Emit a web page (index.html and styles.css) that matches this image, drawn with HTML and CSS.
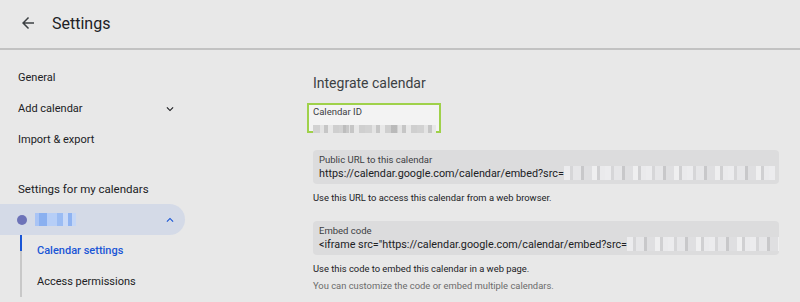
FILE: index.html
```html
<!DOCTYPE html>
<html lang="en">
<head>
  <meta charset="UTF-8">
  <title>Settings</title>
  <link rel="stylesheet" href="styles.css">
</head>
<body>
  <header class="topbar">
    <button class="back-btn" aria-label="Back">
      <svg viewBox="0 0 24 24" width="18" height="18"><path d="M20 11H7.83l5.59-5.59L12 4l-8 8 8 8 1.41-1.41L7.83 13H20v-2z" fill="#3c4043"/></svg>
    </button>
    <h1>Settings</h1>
  </header>

  <div class="layout">
    <!-- SIDEBAR -->
    <nav class="sidebar">
      <div class="nav-item">General</div>
      <div class="nav-item">Add calendar
        <svg class="chev" viewBox="0 0 24 24" width="14" height="14"><path d="M7.41 8.59 12 13.17l4.59-4.58L18 10l-6 6-6-6z" fill="#202124"/></svg>
      </div>
      <div class="nav-item">Import &amp; export</div>

      <div class="nav-title">Settings for my calendars</div>
      <div class="cal-row">
        <span class="cal-dot"></span>
        <span class="mosaic name-mosaic"></span>
        <svg class="chev" viewBox="0 0 24 24" width="14" height="14"><path d="M7.41 15.41 12 10.83l4.59 4.58L18 14l-6-6-6 6z" fill="#1a56d6"/></svg>
      </div>
      <div class="sub-nav">
        <div class="sub-item active">Calendar settings</div>
        <div class="sub-item">Access permissions</div>
      </div>
    </nav>

    <!-- MAIN -->
    <main class="content">
      <h2>Integrate calendar</h2>

      <div class="id-box">
        <div class="field-label">Calendar ID</div>
        <span class="mosaic id-mosaic"></span>
      </div>

      <div class="field-box">
        <div class="field-label">Public URL to this calendar</div>
        <div class="field-value">https://calendar.google.com/calendar/embed?src=<span class="mosaic url-mosaic"></span></div>
      </div>
      <p class="hint">Use this URL to access this calendar from a web browser.</p>

      <div class="field-box embed">
        <div class="field-label">Embed code</div>
        <div class="field-value">&lt;iframe src="https://calendar.google.com/calendar/embed?src=<span class="mosaic url-mosaic"></span></div>
      </div>
      <p class="hint">Use this code to embed this calendar in a web page.</p>
      <p class="hint muted">You can customize the code or embed multiple calendars.</p>
    </main>
  </div>
</body>
</html>
```

FILE: styles.css
```css
* {
  margin: 0;
  padding: 0;
  box-sizing: border-box;
}

body {
  font-family: Roboto, 'Liberation Sans', sans-serif;
  background-color: #e8e8e8;
  color: #202124;
  width: 800px;
  height: 302px;
  overflow: hidden;
}

.topbar {
  height: 50px;
  display: flex;
  align-items: center;
  padding-left: 19px;
  border-bottom: 2px solid #c2c2c2;
}

.back-btn {
  border: none;
  background: none;
  width: 18px;
  height: 18px;
  display: flex;
  margin-right: 15px;
  margin-top: -2px;
}

.topbar h1 {
  font-size: 16px;
  font-weight: 400;
  color: #202124;
  margin-top: -2px;
}

.layout {
  display: flex;
}

.sidebar {
  width: 185px;
  flex-shrink: 0;
  padding-top: 12px;
}

.nav-item {
  height: 31px;
  display: flex;
  align-items: center;
  justify-content: space-between;
  padding: 0 8px 0 18px;
  font-size: 11px;
  color: #202124;
  white-space: nowrap;
}

.nav-title {
  margin-top: 18px;
  height: 31px;
  display: flex;
  align-items: center;
  padding-left: 18px;
  font-size: 11.5px;
  color: #202124;
  white-space: nowrap;
}

.cal-row {
  height: 31px;
  display: flex;
  align-items: center;
  padding: 0 8px 0 17px;
  background-color: #d4dae7;
  border-radius: 0 16px 16px 0;
}

.cal-dot {
  width: 10px;
  height: 10px;
  border-radius: 50%;
  background-color: #6d73b8;
  margin-right: 8px;
}

.cal-row .chev {
  margin-left: auto;
}

.mosaic {
  display: inline-block;
  vertical-align: middle;
}

.name-mosaic {
  width: 41px;
  height: 13px;
  background:
    linear-gradient(90deg, #a9c4f5 0 4px, #8ab0f0 4px 12px, #b6cef7 12px 22px, #9bbcf3 22px 28px, #c9d9f7 28px 33px, #8fb3f1 33px 37px, #c3d6f7 37px);
}

.sub-nav {
  margin-left: 20px;
  border-left: 2px solid #c8c8c8;
}

.sub-item {
  height: 31px;
  display: flex;
  align-items: center;
  padding-left: 15px;
  font-size: 11px;
  color: #202124;
  white-space: nowrap;
}

.sub-item.active {
  color: #1a56d6;
  font-weight: 500;
  position: relative;
}

.sub-item.active::before {
  content: "";
  position: absolute;
  left: -2px;
  top: 0;
  width: 2px;
  height: 16px;
  background-color: #1a56d6;
}

.content {
  flex: 1;
  min-width: 0;
  padding: 25px 21px 0 128px;
}

.content h2 {
  font-size: 14px;
  font-weight: 400;
  color: #3c4043;
  margin-bottom: 12px;
}

.id-box {
  width: 134px;
  height: 30px;
  margin-left: -6px;
  border: 2px solid #9fd14a;
  background-color: #f3f3f3;
  padding: 1px 4px;
}

.field-label {
  font-size: 9.5px;
  color: #3c4043;
  line-height: 12px;
}

.id-mosaic {
  width: 123px;
  height: 8px;
  background:
    linear-gradient(90deg, transparent 0 30px, rgba(150,150,150,0.35) 30px 36px, transparent 36px 78px, rgba(140,140,140,0.35) 78px 84px, transparent 84px),
    repeating-linear-gradient(90deg, #d2d2d2 0 7px, #e4e4e4 7px 11px, #c6c6c6 11px 15px, #e8e8e8 15px 20px, #cfcfcf 20px 26px);
}

.field-box {
  margin-top: 17px;
  background-color: #dcdcdd;
  border-radius: 4px;
  height: 34px;
  padding: 4px 6px;
  overflow: hidden;
  white-space: nowrap;
}

.field-value {
  font-size: 10.8px;
  color: #202124;
  line-height: 16px;
}

.url-mosaic {
  width: 211px;
  height: 14px;
  margin-top: -2px;
  background:
    linear-gradient(180deg, transparent 0 4px, rgba(0,0,0,0) 4px 10px, transparent 10px),
    repeating-linear-gradient(90deg, #ececee 0 6px, #d6d6d8 6px 9px, #e6e6e8 9px 17px, #c8c8ca 17px 20px, #dfdfe1 20px 28px, #efeff0 28px 33px, #d0d0d2 33px 36px, #eaeaec 36px 41px);
}

.hint {
  font-size: 9.4px;
  color: #202124;
  margin-top: 8px;
  line-height: 12px;
}

.muted {
  color: #6b6b6b;
  margin-top: 5px;
}
```
